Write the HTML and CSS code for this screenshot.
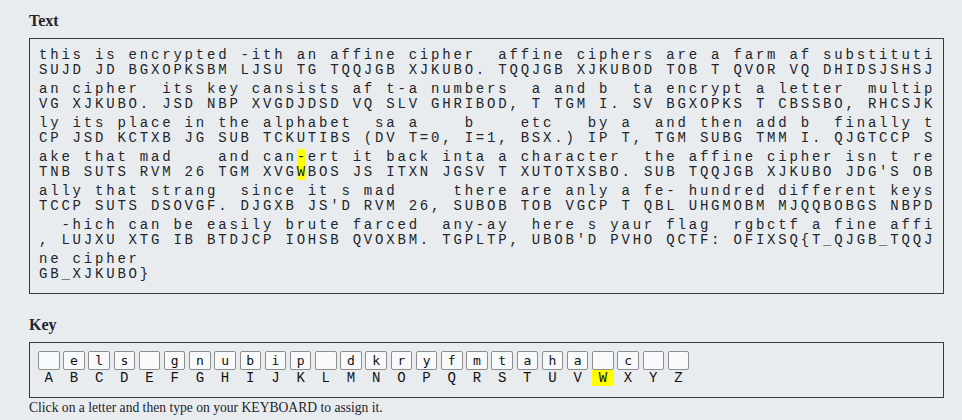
FILE: index.html
```html
<!DOCTYPE html>
<html>
<head>
<meta charset="utf-8">
<link rel="stylesheet" href="styles.css">
</head>
<body>
<main class="page">
  <h3 class="heading heading-text">Text</h3>
  <div class="textbox">
    <div class="group"><div class="line">this is encrypted -ith an affine cipher  affine ciphers are a farm af substituti</div><div class="line">SUJD JD BGXOPKSBM LJSU TG TQQJGB XJKUBO. TQQJGB XJKUBOD TOB T QVOR VQ DHIDSJSHSJ</div></div>
    <div class="group"><div class="line">an cipher  its key cansists af t-a numbers  a and b  ta encrypt a letter  multip</div><div class="line">VG XJKUBO. JSD NBP XVGDJDSD VQ SLV GHRIBOD, T TGM I. SV BGXOPKS T CBSSBO, RHCSJK</div></div>
    <div class="group"><div class="line">ly its place in the alphabet  sa a    b    etc   by a  and then add b  finally t</div><div class="line">CP JSD KCTXB JG SUB TCKUTIBS (DV T=0, I=1, BSX.) IP T, TGM SUBG TMM I. QJGTCCP S</div></div>
    <div class="group"><div class="line">ake that mad    and can<span class="hl">-</span>ert it back inta a character  the affine cipher isn t re</div><div class="line">TNB SUTS RVM 26 TGM XVG<span class="hl">W</span>BOS JS ITXN JGSV T XUTOTXSBO. SUB TQQJGB XJKUBO JDG'S OB</div></div>
    <div class="group"><div class="line">ally that strang  since it s mad     there are anly a fe- hundred different keys</div><div class="line">TCCP SUTS DSOVGF. DJGXB JS'D RVM 26, SUBOB TOB VGCP T QBL UHGMOBM MJQQBOBGS NBPD</div></div>
    <div class="group"><div class="line">  -hich can be easily brute farced  any-ay  here s yaur flag  rgbctf a fine affi</div><div class="line">, LUJXU XTG IB BTDJCP IOHSB QVOXBM. TGPLTP, UBOB'D PVHO QCTF: OFIXSQ{T_QJGB_TQQJ</div></div>
    <div class="group"><div class="line">ne cipher </div><div class="line">GB_XJKUBO}</div></div>
  </div>

  <h3 class="heading heading-key">Key</h3>
  <div class="keybox">
    <div class="cell"><div class="slot"></div><div class="label">A</div></div>
    <div class="cell"><div class="slot">e</div><div class="label">B</div></div>
    <div class="cell"><div class="slot">l</div><div class="label">C</div></div>
    <div class="cell"><div class="slot">s</div><div class="label">D</div></div>
    <div class="cell"><div class="slot"></div><div class="label">E</div></div>
    <div class="cell"><div class="slot">g</div><div class="label">F</div></div>
    <div class="cell"><div class="slot">n</div><div class="label">G</div></div>
    <div class="cell"><div class="slot">u</div><div class="label">H</div></div>
    <div class="cell"><div class="slot">b</div><div class="label">I</div></div>
    <div class="cell"><div class="slot">i</div><div class="label">J</div></div>
    <div class="cell"><div class="slot">p</div><div class="label">K</div></div>
    <div class="cell"><div class="slot"></div><div class="label">L</div></div>
    <div class="cell"><div class="slot">d</div><div class="label">M</div></div>
    <div class="cell"><div class="slot">k</div><div class="label">N</div></div>
    <div class="cell"><div class="slot">r</div><div class="label">O</div></div>
    <div class="cell"><div class="slot">y</div><div class="label">P</div></div>
    <div class="cell"><div class="slot">f</div><div class="label">Q</div></div>
    <div class="cell"><div class="slot">m</div><div class="label">R</div></div>
    <div class="cell"><div class="slot">t</div><div class="label">S</div></div>
    <div class="cell"><div class="slot">a</div><div class="label">T</div></div>
    <div class="cell"><div class="slot">h</div><div class="label">U</div></div>
    <div class="cell"><div class="slot">a</div><div class="label">V</div></div>
    <div class="cell"><div class="slot"></div><div class="label label-hl">W</div></div>
    <div class="cell"><div class="slot">c</div><div class="label">X</div></div>
    <div class="cell"><div class="slot"></div><div class="label">Y</div></div>
    <div class="cell"><div class="slot"></div><div class="label">Z</div></div>
  </div>
  <p class="hint">Click on a letter and then type on your KEYBOARD to assign it.</p>
</main>
</body>
</html>
```

FILE: styles.css
```css
html, body {
  margin: 0;
  padding: 0;
  background: #e9ecef;
  color: #212529;
}

.page {
  padding: 11px 18px 0 29px;
}

.heading {
  margin: 0 0 7px 0;
  font-family: "Liberation Serif", serif;
  font-weight: bold;
  font-size: 16px;
  line-height: 20px;
}

.heading-key {
  margin-top: 21px;
}

.textbox {
  border: 1px solid #343a40;
  padding: 9px 8px 7px 9px;
  font-family: "Liberation Mono", monospace;
  font-size: 14px;
  line-height: 15px;
  letter-spacing: 2.8px;
}

.group {
  margin-bottom: 4px;
}

.line {
  white-space: pre;
}

.hl {
  background: #ffff00;
  letter-spacing: 0;
  margin-right: 2.8px;
}

.keybox {
  border: 1px solid #343a40;
  padding: 8px 8px 11px 8px;
  display: flex;
  gap: 3.7px;
}

.cell {
  width: 21.5px;
  display: flex;
  flex-direction: column;
  align-items: stretch;
}

.slot {
  height: 17px;
  border: 1px solid #8f8f8f;
  border-radius: 2px;
  background: #f8f9fa;
  font-family: "DejaVu Sans Mono", monospace;
  font-size: 13px;
  line-height: 17px;
  text-align: center;
  color: #111;
}

.label {
  height: 16px;
  font-family: "Liberation Mono", monospace;
  font-size: 14px;
  line-height: 16px;
  text-align: center;
  color: #111;
}

.label-hl {
  background: #ffff00;
}

.hint {
  margin: 2px 0 0 0;
  font-family: "Liberation Serif", serif;
  font-size: 13.6px;
  line-height: 16px;
}
```
